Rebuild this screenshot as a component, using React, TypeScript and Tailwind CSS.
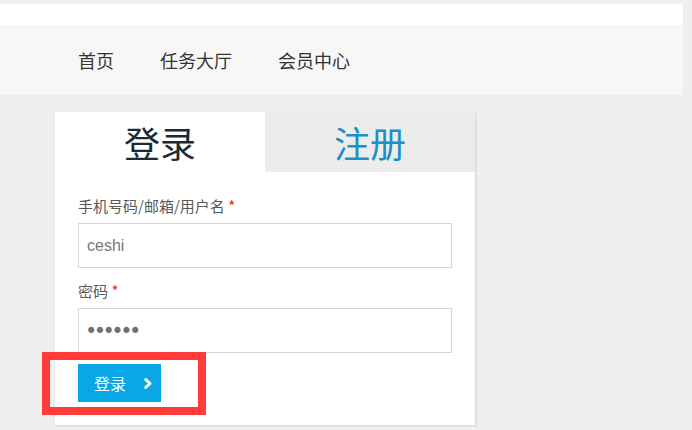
import React from "react";

const cjk = '"Noto Sans CJK SC", "Noto Sans", sans-serif';

function Chevron() {
  return (
    <svg width="8" height="11" viewBox="0 0 8 11" aria-hidden="true">
      <path d="M1.8 1.6 L6 5.5 L1.8 9.4" fill="none" stroke="#ffffff" strokeWidth="3" strokeLinecap="round" strokeLinejoin="round" />
    </svg>
  );
}

export default function App() {
  const navItems = ["首页", "任务大厅", "会员中心"];

  return (
    <div className="relative min-h-[430px] w-[692px] overflow-hidden bg-[#efefef] pt-[4px]" style={{ fontFamily: cjk }}>
      {/* header */}
      <div className="w-[683px]">
        <div className="h-[21px] bg-white" />
        <nav className="flex h-[70px] items-center gap-[46px] bg-[#f7f7f7] pl-[78px] text-[18px] text-[#333]">
          {navItems.map((item) => (
            <a key={item} className="leading-none">
              {item}
            </a>
          ))}
        </nav>
      </div>

      {/* login card */}
      <div className="ml-[55px] mt-[17px] w-[420px] bg-white shadow-[1px_1px_2px_rgba(0,0,0,0.12)]">
        <div className="flex h-[60px]">
          <div className="flex w-1/2 items-center justify-center bg-white text-[36px] leading-none text-[#1c2a36]">
            登录
          </div>
          <div className="flex w-1/2 items-center justify-center bg-[#ececec] text-[36px] leading-none text-[#1b8fc7]">
            注册
          </div>
        </div>

        <div className="px-[23px] pb-[23px] pt-[24px]">
          <label className="block h-[20px] text-[15px] leading-[20px] text-[#595959]">
            手机号码/邮箱/用户名 <span className="text-[#e52a2a]">*</span>
          </label>
          <input
            readOnly
            value="ceshi"
            className="mt-[7px] block h-[45px] w-[374px] border border-[#d6d6d6] bg-white pl-[8px] text-[16px] text-[#777] outline-none"
            style={{ fontFamily: '"Liberation Sans", Arial, sans-serif' }}
          />

          <label className="mt-[13px] block h-[20px] text-[15px] leading-[20px] text-[#595959]">
            密码 <span className="text-[#e52a2a]">*</span>
          </label>
          <input
            readOnly
            type="password"
            value="123456"
            className="mt-[7px] block h-[45px] w-[374px] border border-[#d6d6d6] bg-white pl-[6px] text-[21px] tracking-[-3.6px] text-[#707070] outline-none"
            style={{ fontFamily: '"DejaVu Sans", sans-serif' }}
          />

          <button className="mt-[11px] flex h-[38px] w-[83px] items-center gap-[18px] bg-[#0aa7e7] pl-[16px] text-[16px] leading-none text-white">
            <span>登录</span>
            <Chevron />
          </button>
        </div>
      </div>

      {/* annotation box */}
      <div className="pointer-events-none absolute left-[42px] top-[352px] h-[63px] w-[164px] border-[8px] border-[#ff3b3b]" />
    </div>
  );
}
